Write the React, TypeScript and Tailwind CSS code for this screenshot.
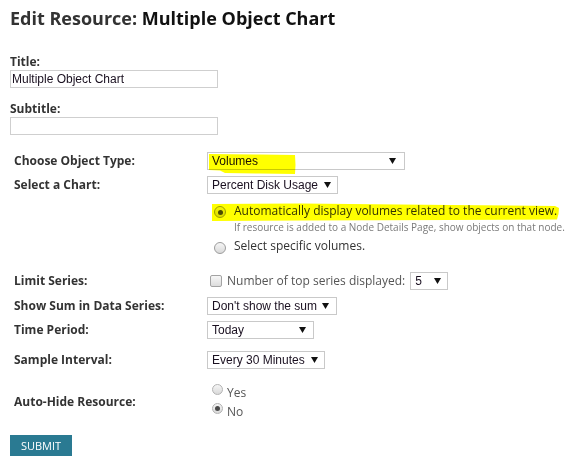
import React from "react";

const OPEN = "font-['Open_Sans',sans-serif]";
const ARIAL = "font-['Liberation_Sans',Arial,sans-serif]";

function Arrow() {
  return (
    <svg width="7" height="6" viewBox="0 0 7 6" className="shrink-0">
      <polygon points="0,0 7,0 3.5,6" fill="#111" />
    </svg>
  );
}

function Sel({ text, className }: { text: string; className: string }) {
  return (
    <div
      className={`h-[18px] border border-[#c9c9c9] bg-white flex items-center justify-between pl-[4px] ${ARIAL} text-[12px] leading-[16px] text-[#1a1020] ${className}`}
    >
      <span>{text}</span>
      <Arrow />
    </div>
  );
}

function Radio({ checked, size = "lg" }: { checked?: boolean; size?: "lg" | "sm" }) {
  const box =
    size === "lg"
      ? "w-[12px] h-[12px] border-[#9c9c9c]"
      : "w-[11px] h-[11px] border-[#b3b3b3]";
  return (
    <span
      className={`${box} shrink-0 rounded-full border bg-gradient-to-b from-[#f6f6f6] to-[#d9d9d9] flex items-center justify-center`}
    >
      {checked && <span className="w-[5px] h-[5px] rounded-full bg-[#4a4a4a]" />}
    </span>
  );
}

function Label({ children }: { children: React.ReactNode }) {
  return (
    <div className="w-[197px] shrink-0 pl-[4px] text-[12px] leading-[16px] font-bold text-[#333]">
      {children}
    </div>
  );
}

export default function App() {
  return (
    <div className={`relative w-[573px] h-[467px] bg-white overflow-hidden px-[10px] ${OPEN}`}>
      <h1 className="mt-[6px] text-[18px] leading-[24px] font-bold whitespace-nowrap">
        <span className="text-[#333]">Edit Resource: </span>
        <span className="text-[#111]">Multiple Object Chart</span>
      </h1>

      <div className="mt-[24px] text-[12px] leading-[16px] font-bold text-[#333]">Title:</div>
      <div className={`w-[208px] h-[18px] border border-[#cfcfcf] pl-[1px] flex items-center ${ARIAL} text-[12px] text-[#1a1020]`}>
        Multiple Object Chart
      </div>

      <div className="mt-[13px] text-[12px] leading-[16px] font-bold text-[#333]">Subtitle:</div>
      <div className="w-[208px] h-[18px] border border-[#cfcfcf]" />

      <div className="mt-[17px] flex items-center">
        <Label>Choose Object Type:</Label>
        <Sel text="Volumes" className="w-[198px] pr-[8px]" />
      </div>

      <div className="mt-[6px] flex items-center">
        <Label>Select a Chart:</Label>
        <Sel text="Percent Disk Usage" className="w-[131px] pr-[6px]" />
      </div>

      <div className="mt-[9px] flex">
        <div className="w-[197px] shrink-0" />
        <div className="pl-[7px]">
          <div className="flex items-start gap-[8px] text-[12px] leading-[16px] text-[#333]">
            <span className="mt-[3px]"><Radio checked /></span>
            <span className="whitespace-nowrap">Automatically display volumes related to the current view.</span>
          </div>
          <div className="mt-[1px] pl-[20px] text-[10px] leading-[14px] text-[#7a7a7a] whitespace-nowrap">
            If resource is added to a Node Details Page, show objects on that node.
          </div>
          <div className="mt-[4px] flex items-start gap-[8px] text-[12px] leading-[16px] text-[#333]">
            <span className="mt-[4px]"><Radio /></span>
            <span className="whitespace-nowrap">Select specific volumes.</span>
          </div>
        </div>
      </div>

      <div className="mt-[18px] flex items-center">
        <Label>Limit Series:</Label>
        <div className="flex items-center pl-[3px]">
          <span className="w-[12px] h-[12px] rounded-[2px] border border-[#a3a3a3] bg-gradient-to-b from-[#f7f7f7] to-[#dcdcdc] shrink-0" />
          <span className="ml-[5px] text-[12px] leading-[16px] text-[#555] whitespace-nowrap">Number of top series displayed:</span>
          <Sel text="5" className="ml-[5px] w-[38px] pr-[6px]" />
        </div>
      </div>

      <div className="mt-[7px] flex items-center">
        <Label>Show Sum in Data Series:</Label>
        <Sel text="Don't show the sum" className="w-[130px] pr-[7px]" />
      </div>

      <div className="mt-[6px] flex items-center">
        <Label>Time Period:</Label>
        <Sel text="Today" className="w-[107px] pr-[7px]" />
      </div>

      <div className="mt-[12px] flex items-center">
        <Label>Sample Interval:</Label>
        <Sel text="Every 30 Minutes" className="w-[118px] pr-[6px]" />
      </div>

      <div className="mt-[14px] flex items-center">
        <Label>Auto-Hide Resource:</Label>
        <div className="pl-[5px] text-[12px] leading-[19px] text-[#555]">
          <div className="flex items-start gap-[4px]">
            <span className="mt-[1px]"><Radio size="sm" /></span>
            <span>Yes</span>
          </div>
          <div className="flex items-start gap-[4px]">
            <span className="mt-[1px]"><Radio size="sm" checked /></span>
            <span>No</span>
          </div>
        </div>
      </div>

      <button className="mt-[14px] w-[62px] h-[21px] bg-[#2a7a92] text-white text-[11px] leading-[21px] text-center">
        SUBMIT
      </button>

      <svg
        className="absolute left-0 top-0 pointer-events-none mix-blend-multiply"
        width="573"
        height="467"
        viewBox="0 0 573 467"
      >
        <polygon
          points="209,154 260,154.5 295,155 295.5,165 295,174 260,173.5 225,173 220,170.5 209,170"
          fill="#ffff00"
        />
        <polygon
          points="212,204 300,203.5 450,205 555,206 559,208 558.5,214 557,219.5 450,220 300,220.5 212,221"
          fill="#ffff00"
        />
      </svg>
    </div>
  );
}
